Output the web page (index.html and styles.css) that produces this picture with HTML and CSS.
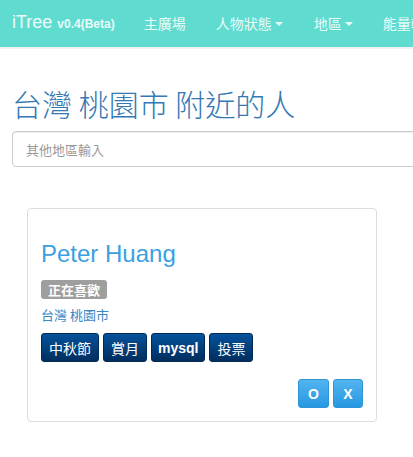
FILE: index.html
```html
<!DOCTYPE html>
<html lang="zh-Hant">
<head>
<meta charset="utf-8">
<link rel="stylesheet" href="styles.css">
</head>
<body>
<nav class="navbar">
  <a class="brand">iTree <small>v0.4(Beta)</small></a>
  <ul class="nav">
    <li><a>主廣場</a></li>
    <li><a>人物狀態<span class="caret"></span></a></li>
    <li><a>地區<span class="caret"></span></a></li>
    <li><a>能量轉換</a></li>
  </ul>
</nav>
<main class="container">
  <h1 class="title">台灣 桃園市 附近的人</h1>
  <input class="form-control" type="text" placeholder="其他地區輸入">
  <section class="card">
    <h3 class="name">Peter Huang</h3>
    <span class="label">正在喜歡</span>
    <p class="location">台灣 桃園市</p>
    <div class="tags">
      <button class="btn btn-tag">中秋節</button>
      <button class="btn btn-tag">賞月</button>
      <button class="btn btn-tag btn-latin">mysql</button>
      <button class="btn btn-tag">投票</button>
    </div>
    <div class="actions">
      <button class="btn btn-act">O</button>
      <button class="btn btn-act">X</button>
    </div>
  </section>
</main>
</body>
</html>
```
FILE: styles.css
```css
html, body {
  margin: 0;
  padding: 0;
  overflow: hidden;
  background: #fff;
}
body {
  font-family: "Liberation Sans", "Noto Sans CJK TC", sans-serif;
  font-size: 14px;
  color: #333;
  width: 413px;
}
.navbar {
  height: 47px;
  background: #5fdbd0;
  border-bottom: 2px solid #eef2f2;
  display: flex;
  align-items: center;
  padding-left: 12px;
  white-space: nowrap;
  overflow: hidden;
}
.brand {
  color: #e8fbf9;
  font-size: 18px;
  margin-right: 14px;
  line-height: 20px;
  position: relative;
  top: -1px;
}
.brand small {
  font-size: 12px;
  font-weight: bold;
}
.nav {
  display: flex;
  list-style: none;
  margin: 0;
  padding: 0;
}
.nav a {
  display: flex;
  align-items: center;
  color: #e8fbf9;
  padding: 0 15px;
  font-size: 14px;
  line-height: 20px;
}
.nav li:nth-child(2) a {
  padding-right: 16px;
}
.caret {
  display: inline-block;
  width: 0;
  height: 0;
  margin-left: 3px;
  border-top: 4px solid #e8fbf9;
  border-left: 4px solid transparent;
  border-right: 4px solid transparent;
}
.container {
  padding: 0 0 0 12px;
}
.title {
  margin: 35px 0 0;
  font-size: 30px;
  font-weight: 300;
  line-height: 38px;
  color: #3478b4;
  font-family: "Noto Sans CJK TC", sans-serif;
}
.form-control {
  display: block;
  box-sizing: border-box;
  width: 520px;
  height: 36px;
  margin-top: 9px;
  padding: 6px 13px;
  border: 1px solid #ccc;
  border-radius: 4px;
  font-family: "Noto Sans CJK TC", sans-serif;
  font-size: 13px;
  box-shadow: inset 0 1px 1px rgba(0,0,0,0.075);
}
.form-control::placeholder {
  color: #999;
}
.card {
  box-sizing: border-box;
  width: 350px;
  margin: 41px 0 0 15px;
  border: 1px solid #ddd;
  border-radius: 4px;
  padding: 32px 13px 13px 13px;
}
.name {
  margin: 0;
  font-size: 24px;
  font-weight: 400;
  line-height: 26px;
  color: #3aa0e2;
}
.label {
  display: inline-block;
  margin-top: 13px;
  background: #9e9e9e;
  color: #fff;
  font-weight: bold;
  font-size: 13px;
  line-height: 19px;
  height: 19px;
  padding: 0 7px;
  border-radius: 3px;
  font-family: "Noto Sans CJK TC", sans-serif;
}
.location {
  margin: 6px 0 0;
  font-size: 13px;
  line-height: 20px;
  color: #3a86c4;
  font-family: "Noto Sans CJK TC", sans-serif;
}
.tags {
  display: flex;
  gap: 4px;
  margin-top: 8px;
}
.btn {
  box-sizing: border-box;
  height: 29px;
  font-family: "Liberation Sans", "Noto Sans CJK TC", sans-serif;
  font-size: 14px;
  color: #fff;
  border-radius: 3px;
  cursor: pointer;
  padding: 0 7px;
}
.btn-tag {
  background: linear-gradient(#04529c, #012e5e);
  border: 1px solid #012a55;
}
.btn-latin {
  font-weight: bold;
  padding: 0 6px;
}
.actions {
  display: flex;
  justify-content: flex-end;
  gap: 4px;
  margin-top: 17px;
}
.btn-act {
  width: 31px;
  padding: 0;
  background: linear-gradient(#52b4ef, #2698e1);
  border: 1px solid #2f95d6;
  font-weight: bold;
}
.btn-act + .btn-act {
  width: 30px;
}
```
